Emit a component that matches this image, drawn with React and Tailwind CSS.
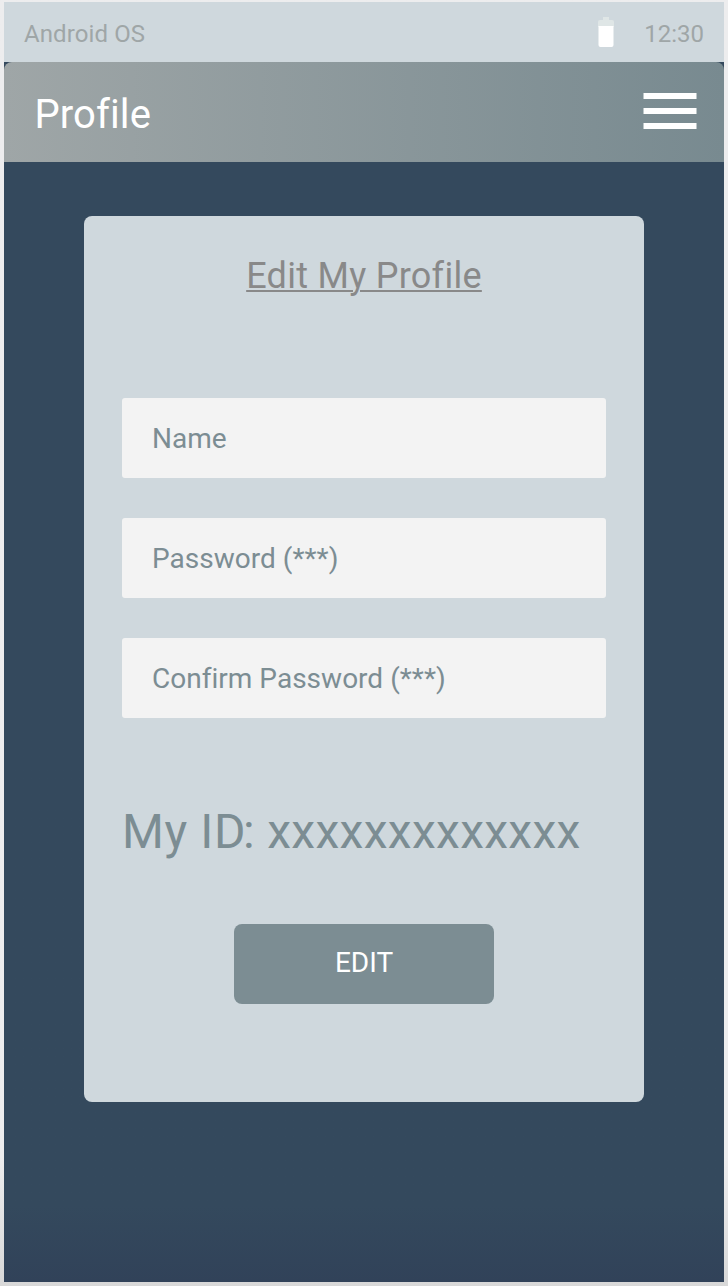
import React from 'react';

const fields = [
  { id: 'name', placeholder: 'Name', type: 'text' },
  { id: 'password', placeholder: 'Password (***)', type: 'password' },
  { id: 'confirm', placeholder: 'Confirm Password (***)', type: 'password' },
];

function StatusBar() {
  return (
    <div className="flex h-[60px] items-center bg-[#cfd8dd] px-5 text-2xl text-[#9fa6a7]">
      <span className="mt-1 tracking-[0.1px]">Android OS</span>
      <svg className="ml-auto" width="16" height="30" viewBox="0 0 16 30" aria-hidden="true">
        <path d="M5 0h6v3h3a2 2 0 0 1 2 2v5H0V5a2 2 0 0 1 2-2h3z" fill="#dfe6e6" />
        <path d="M.5 9h15v19a2 2 0 0 1-2 2h-11a2 2 0 0 1-2-2z" fill="#ffffff" />
      </svg>
      <span className="mt-1 ml-[30px]">12:30</span>
    </div>
  );
}

function Header() {
  return (
    <header className="flex h-[100px] items-center justify-between rounded-t-lg bg-linear-to-r from-[#9fa6a7] to-[#788a90] pr-[27px] pl-[30.5px]">
      <h1 className="mt-1.5 text-[40px] leading-none tracking-[0.1px] text-white">Profile</h1>
      <button aria-label="Menu" className="mb-0.5 flex flex-col gap-[9px]">
        <span className="h-1.5 w-[54px] border-x border-[#bdc6c8] bg-white" />
        <span className="h-1.5 w-[54px] border-x border-[#bdc6c8] bg-white" />
        <span className="h-1.5 w-[54px] border-x border-[#bdc6c8] bg-white" />
      </button>
    </header>
  );
}

export default function App() {
  return (
    <div className="h-[1286px] w-[728px] bg-linear-to-b from-[#ededee] from-90% to-[#d8d8d8] px-1 pt-0.5 pb-1 font-[Roboto,sans-serif] [font-variant-ligatures:none]">
      <div className="flex h-full flex-col bg-linear-to-b from-[#34495d] from-94% to-[#314259]">
        <StatusBar />
        <Header />
        <main className="mx-auto mt-[54px] flex h-[886px] w-[560px] flex-col items-center rounded-lg bg-[#cfd8dd] px-[38px]">
          <h2 className="mt-[39px] text-4xl leading-[42px] tracking-[0.28px] text-[#898989] underline decoration-2 underline-offset-2">Edit My Profile</h2>
          <form className="mt-[101px] flex w-full flex-col gap-10">
            {fields.map((f) => (
              <input
                key={f.id}
                type={f.type}
                aria-label={f.placeholder}
                placeholder={f.placeholder}
                className="h-20 w-full rounded-[3px] bg-[#f3f3f3] px-[30px] text-[28px] tracking-[0.02px] text-[#7c8d93] placeholder:text-[#7c8d93]"
              />
            ))}
          </form>
          <p className="mt-[86px] w-full text-5xl leading-[56px] text-[#7c8d93]">
            <span className="tracking-[0.6px]">My I</span>
            <span className="tracking-[-2.6px]">D</span>
            <span className="tracking-[0.4px]">: </span>
            <span className="tracking-[0.3px]">xxxxxxxxxxxxx</span>
          </p>
          <button className="mt-16 h-20 w-[260px] rounded-lg bg-[#7c8d93] pb-0.5 text-[28px] text-white">EDIT</button>
        </main>
      </div>
    </div>
  );
}
